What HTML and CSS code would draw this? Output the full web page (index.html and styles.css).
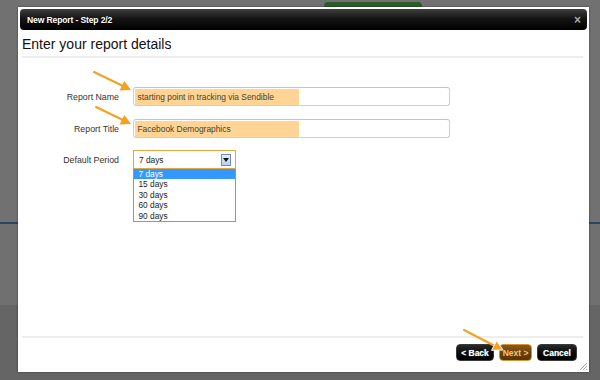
FILE: index.html
```html
<!DOCTYPE html>
<html>
<head>
<meta charset="utf-8">
<link rel="stylesheet" href="styles.css">
</head>
<body>
<div class="desktop">
  <div class="band band-top"><div class="tab"></div></div>
  <div class="band band-line"></div>
  <div class="band band-mid"></div>
  <div class="band band-low"></div>
</div>

<div class="modal">
  <div class="titlebar">
    <span class="title">New Report - Step 2/2</span>
    <span class="close">×</span>
  </div>
  <h1 class="heading">Enter your report details</h1>
  <div class="rule"></div>
  <div class="form">
    <div class="row">
      <label class="label">Report Name</label>
      <div class="field"><span class="hl">starting point in tracking via Sendible</span></div>
    </div>
    <div class="row">
      <label class="label">Report Title</label>
      <div class="field"><span class="hl">Facebook Demographics</span></div>
    </div>
    <div class="row">
      <label class="label">Default Period</label>
      <div class="select-wrap">
        <div class="select">
          <span class="sel-text">7 days</span>
          <span class="sel-btn">
            <svg width="6" height="4" viewBox="0 0 6 4"><path d="M0 0H6L3 4Z" fill="#111"/></svg>
          </span>
        </div>
        <ul class="options">
          <li class="opt active">7 days</li>
          <li class="opt">15 days</li>
          <li class="opt">30 days</li>
          <li class="opt">60 days</li>
          <li class="opt">90 days</li>
        </ul>
      </div>
    </div>
  </div>
  <div class="rule rule-bottom"></div>
  <div class="footer">
    <button class="btn">&lt; Back</button>
    <button class="btn btn-next">Next &gt;</button>
    <button class="btn">Cancel</button>
  </div>
  <svg class="grip" width="7" height="7" viewBox="0 0 7 7">
    <path d="M7 0L0 7M7 3L3 7M7 6L6 7" stroke="#aaa" stroke-width="1"/>
  </svg>
</div>

<svg class="arrows" width="600" height="380" viewBox="0 0 600 380">
  <g stroke="#f5a01e" stroke-width="2" stroke-linecap="round">
    <line x1="94" y1="72" x2="123" y2="86"/>
    <line x1="96" y1="107" x2="123" y2="120"/>
    <line x1="464" y1="330" x2="495" y2="346"/>
  </g>
  <g fill="#f5a01e">
    <polygon points="131,90 119.6,90.4 124.4,80.9"/>
    <polygon points="131,124 119.6,124.4 124.4,114.9"/>
    <polygon points="503,350 491.5,350.3 496.7,340.8" stroke="#fff" stroke-width="1" stroke-linejoin="round"/>
  </g>
</svg>
</body>
</html>
```

FILE: styles.css
```css
html, body {
  margin: 0;
  padding: 0;
}
body {
  width: 600px;
  height: 380px;
  overflow: hidden;
  position: relative;
  font-family: "Liberation Sans", Arial, sans-serif;
  background: #666;
}

/* desktop behind the dialog */
.desktop {
  display: flex;
  flex-direction: column;
  height: 380px;
}
.band-top {
  height: 222px;
  background: #717171;
  display: flex;
}
.tab {
  margin-top: 2px;
  margin-left: 324px;
  width: 98px;
  height: 8px;
  background: #2c5a28;
  border-radius: 4px 4px 0 0;
}
.band-line {
  height: 2px;
  background: #2b4760;
}
.band-mid {
  height: 81px;
  background: #707070;
}
.band-low {
  flex: 1;
  background: #656565;
}

/* dialog window */
.modal {
  position: absolute;
  left: 18px;
  top: 7px;
  width: 571px;
  height: 365px;
  box-sizing: border-box;
  padding: 2px;
  background: #fff;
  box-shadow: 0 0 2px rgba(0,0,0,0.45);
  display: flex;
  flex-direction: column;
}
.titlebar {
  height: 21px;
  border-radius: 4px;
  background: linear-gradient(#3e3e3e 0%, #151515 45%, #000 100%);
  display: flex;
  align-items: center;
  justify-content: space-between;
  padding: 0 6px 0 7px;
  flex: none;
}
.title {
  color: #fff;
  font-weight: bold;
  font-size: 8.6px;
  letter-spacing: -0.15px;
  text-shadow: 0 1px 1px #000;
}
.close {
  color: #a8a8a8;
  font-weight: bold;
  font-size: 12px;
  line-height: 12px;
}
.heading {
  margin: 6px 0 4px 2px;
  font-size: 14px;
  line-height: 16px;
  font-weight: normal;
  color: #111;
}
.rule {
  margin: 0 4px 0 2px;
  height: 2px;
  background: #eeeeee;
  flex: none;
}

.form {
  flex: 1;
  display: flex;
  flex-direction: column;
  padding-top: 29px;
  padding-left: 2px;
}
.row {
  display: flex;
  align-items: center;
  height: 19px;
  margin-bottom: 13px;
}
.row:nth-child(2) {
  margin-bottom: 12px;
}
.label {
  width: 97px;
  text-align: right;
  margin-right: 14px;
  font-size: 8.8px;
  color: #333;
}
.field {
  width: 317px;
  height: 19px;
  box-sizing: border-box;
  border: 1px solid #cfcfcf;
  border-top-color: #c4c4c4;
  border-radius: 3px;
  padding: 1px 0 0 1px;
  display: flex;
}
.hl {
  display: block;
  width: 164px;
  height: 16px;
  box-sizing: border-box;
  padding-left: 2.5px;
  background: #ffd595;
  font-size: 8.4px;
  line-height: 16px;
  color: #4a3d2e;
  white-space: nowrap;
}

.select-wrap {
  position: relative;
}
.select {
  width: 103px;
  height: 19px;
  box-sizing: border-box;
  border: 1px solid #e6a53e;
  display: flex;
  align-items: center;
  justify-content: space-between;
  padding: 0 4px 0 5px;
  background: #fff;
}
.sel-text {
  font-size: 8.3px;
  color: #222;
}
.sel-btn {
  width: 10px;
  height: 12px;
  box-sizing: border-box;
  border: 1px solid #6d8db4;
  background: linear-gradient(#e6effb, #b9d0ec);
  display: flex;
  align-items: center;
  justify-content: center;
}
.options {
  position: absolute;
  left: 0;
  top: 19px;
  width: 103px;
  box-sizing: border-box;
  margin: 0;
  padding: 0;
  list-style: none;
  border: 1px solid #7f9db9;
  border-top: none;
  background: #fff;
}
.opt {
  height: 10.4px;
  line-height: 10.4px;
  font-size: 8.3px;
  padding-left: 4.5px;
  color: #222;
}
.opt.active {
  background: #3399ff;
  color: #fff;
}

.rule-bottom {
  margin-bottom: 6px;
}
.footer {
  display: flex;
  justify-content: flex-end;
  gap: 5px;
  padding-right: 10px;
  padding-bottom: 9px;
  flex: none;
}
.btn {
  height: 17px;
  box-sizing: border-box;
  padding: 0;
  border: 1px solid #3a3a3a;
  border-radius: 4px;
  background: linear-gradient(#2a2a2a 0%, #0a0a0a 50%, #000 100%);
  color: #fff;
  font-family: "Liberation Sans", Arial, sans-serif;
  font-weight: bold;
  font-size: 8.5px;
  text-shadow: 0 0 1px #7ab;
  width: 38px;
}
.btn-next {
  width: 33px;
  border-color: #d4943a;
  background: linear-gradient(#8a5a14 0%, #6b4007 55%, #583301 100%);
  color: #f6c47a;
  text-shadow: none;
}
.btn:last-child {
  width: 40px;
}
.grip {
  position: absolute;
  right: 2px;
  bottom: 2px;
}

.arrows {
  position: absolute;
  left: 0;
  top: 0;
  pointer-events: none;
}
```
